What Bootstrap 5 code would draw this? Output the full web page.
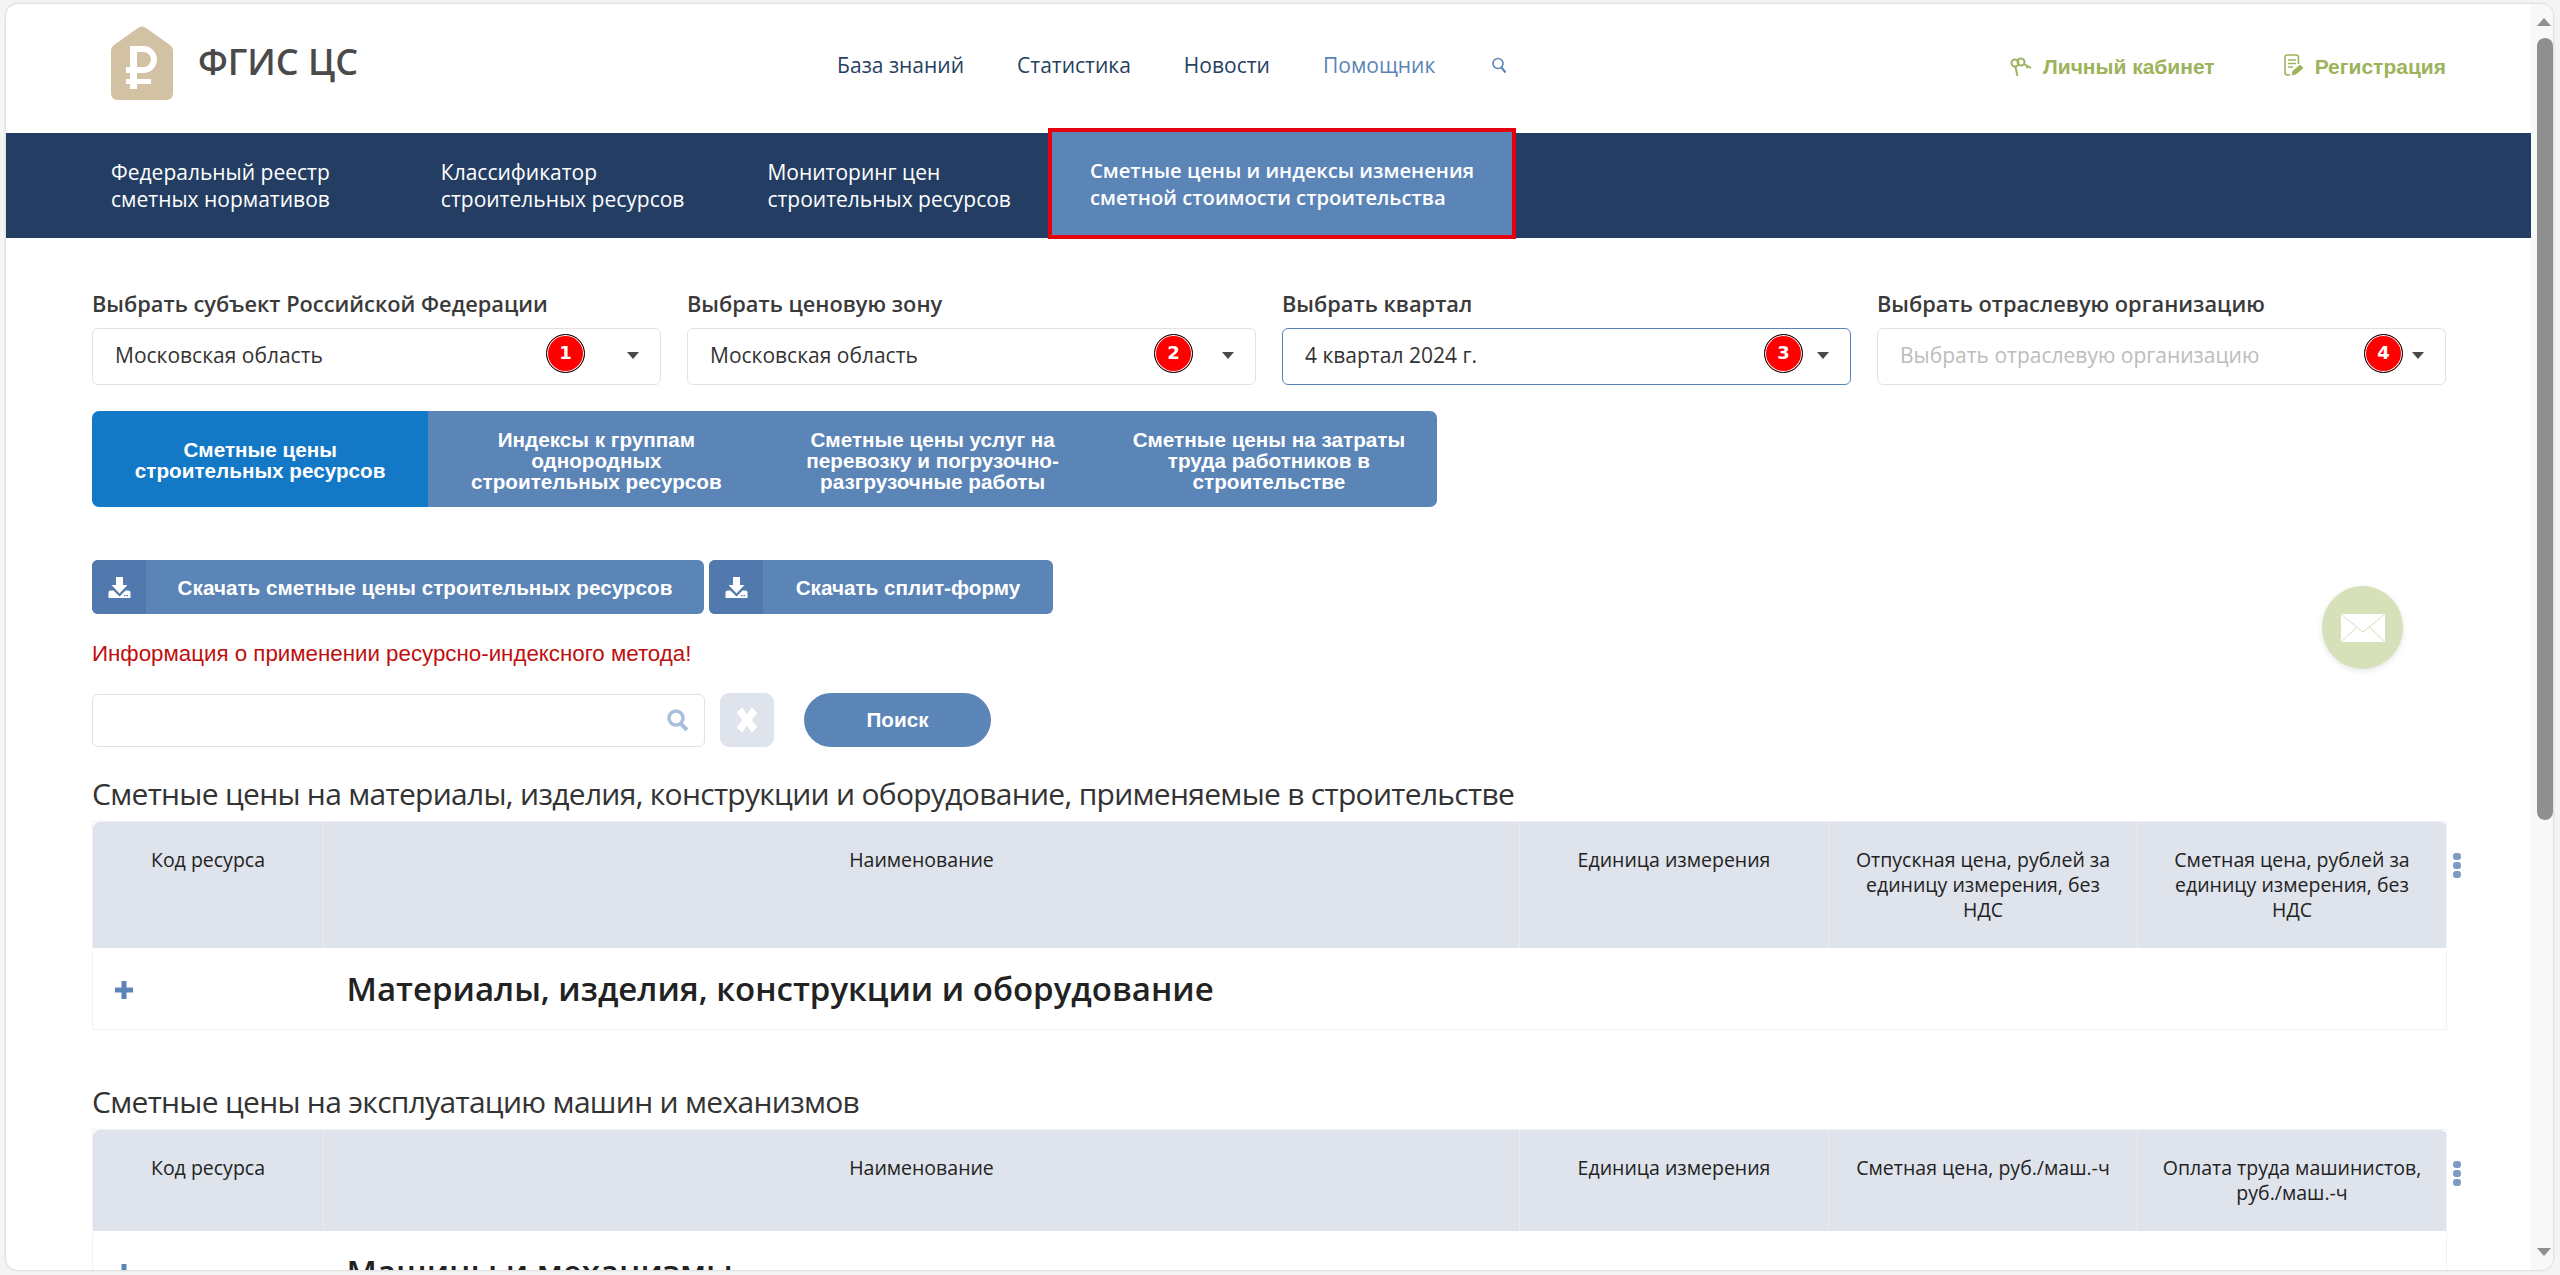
<!DOCTYPE html>
<html lang="ru"><head><meta charset="utf-8"><title>ФГИС ЦС</title>
<link href="https://cdn.jsdelivr.net/npm/bootstrap@5.3.0/dist/css/bootstrap.min.css" rel="stylesheet">
<style>
html,body{height:100%;overflow:hidden;}
body{background:#f4f4f4;padding:4px 7px 5px 6px;font-family:"Open Sans",sans-serif;color:#333;}
.win{height:100%;background:#fff;border-radius:12px;overflow:hidden;box-shadow:0 0 3px rgba(0,0,0,.2);}
.page{flex:1 1 auto;min-width:0;overflow:hidden;position:relative;}
.sbar{flex:0 0 22px;background:#f8f8f8;padding-top:14px;padding-bottom:14px;}
.tri-up{width:0;height:0;border-left:7px solid transparent;border-right:7px solid transparent;border-bottom:8px solid #8f8f8f;margin-left:6px;}
.tri-down{width:0;height:0;border-left:7px solid transparent;border-right:7px solid transparent;border-top:8px solid #8f8f8f;margin:auto 0 0 6px;}
.thumb{height:782px;width:16px;margin:12px 0 0 6px;background:#8f8f8f;border-radius:8px;}
.topbar{height:129px;padding:0 85px 11px 105px;}
.logo-name{font-size:36px;font-weight:600;color:#4a4a4a;margin-left:25px;line-height:1;margin-top:-2px;white-space:nowrap;}
.menu{gap:53px;margin-left:479px;margin-top:6px;font-size:21px;}
.menu a{color:#26405f;text-decoration:none;}
.menu a.hl{color:#5b84b7;}
.menu svg{margin-left:3px;}
.acct a{color:#9db35b;font-family:"Liberation Sans",sans-serif;font-weight:700;font-size:21px;text-decoration:none;gap:11px;}
.acct{gap:69px;margin-top:8px;}
.band{height:105px;background:#243e63;padding-left:105px;}
.band a{color:#fff;font-size:21px;line-height:27px;text-decoration:none;display:block;white-space:nowrap;}
.b1{margin-right:111px;} .b2{margin-right:83px;} .b3{margin-right:37px;}
.band a.act{font-size:20.2px;font-weight:600;background:#5b84b7;border:4px solid #e4000f;margin:-5px 0 -1px;padding:0 38px;height:111px;}
.fields{padding:52px 85px 0 86px;}
.flt{--bs-gutter-x:26px;}
.lbl{font-size:21.8px;font-weight:600;line-height:27px;margin-bottom:11px;color:#3a3a3a;}
.sel{height:57px;border:1px solid #e2e2e2;border-radius:6px;padding:0 21px 2px 22px;font-size:21px;color:#333;}
.sel.foc{border-color:#5b84b7;}
.sel.ph{color:#bcbcbc;}
.caret{margin-left:auto;width:0;height:0;border-left:6px solid transparent;border-right:6px solid transparent;border-top:7px solid #4a4a4a;}
.pin{position:absolute;top:5px;width:39px;height:39px;border-radius:50%;background:#f00;border:1.5px solid #000;color:#fff;font-family:"DejaVu Sans",sans-serif;font-weight:700;font-size:18px;line-height:36px;text-align:center;box-shadow:inset 0 0 0 1px #fff;}
.p1{right:75px;} .p2{right:62px;} .p3{right:47px;} .p4{right:42px;}
.tabs{margin-top:26px;width:1345px;border-radius:7px;overflow:hidden;}
.tabs div{flex:1 1 0;height:96px;background:#5b84b7;color:#fff;font-family:"Liberation Sans",sans-serif;font-weight:700;font-size:20.7px;line-height:21px;text-align:center;padding:2px 10px 0;}
.tabs div.cur{background:#1378c5;}
.dl{margin-top:53px;gap:5px;}
.dlb{height:54px;background:#5b84b7;color:#fff;border-radius:6px;font-family:"Liberation Sans",sans-serif;font-weight:700;font-size:20.7px;overflow:hidden;border:0;padding:0;}
.dli{width:54px;height:54px;background:#5179ad;}
.dlt1{width:558px;text-align:center;padding-top:2px;}.dlt2{width:290px;text-align:center;padding-top:2px;}
.warn{color:#be0f0f;font-family:"Liberation Sans",sans-serif;font-size:22.3px;line-height:24px;margin-top:28px;}
.srch{margin-top:27px;}
.sinp{width:613px;height:53px;border:1px solid #e2e2e2;border-radius:6px;padding-right:15px;}
.xbtn{width:54px;height:54px;margin-left:15px;background:#dfe3ec;border-radius:9px;border:0;padding:0;}
.gobtn{width:187px;height:54px;margin-left:30px;background:#5b84b7;color:#fff;border:0;border-radius:27px;font-family:"Liberation Sans",sans-serif;font-weight:700;font-size:20.7px;}
.ttl{font-size:30px;letter-spacing:-.7px;font-weight:400;line-height:38px;margin:28px 0 8px;color:#333;}
.ttl.t2{margin-top:53px;}
.tw{position:relative;width:2355px;}
.gr{width:100%;table-layout:fixed;border:1px solid #f0f1f4;}
.gr th{background:#dfe3ec;font-weight:400;font-size:19.5px;line-height:25px;text-align:center;vertical-align:top;color:#222;border-left:1px solid #ecedf2;border-bottom:3px solid #fff;box-shadow:0 1px 0 #dfe3ec;padding:25px 20px 0;}
.gr th:first-child{border-left:0;border-top-left-radius:7px;}
.gr th:last-child{border-top-right-radius:7px;}
.gr td{height:80px;vertical-align:middle;border:0;padding:0;}
.h1r th{height:128px;}.h2r th{height:103px;}
.c1{width:231px;}.c2{width:1196px;}.c3{width:309px;}.c4{width:309px;}
.plus{display:block;margin-left:22px;}
.gname{font-size:33px;font-weight:600;color:#222;padding:0 0 2px 23px!important;white-space:nowrap;}
.dots{position:absolute;top:32px;right:-14px;width:8px;}
.dots i{display:block;width:8px;height:7px;border-radius:3px;background:#7f9bc3;margin-bottom:2px;}
.mail{position:absolute;left:2316px;top:582px;width:81px;height:83px;border-radius:50%;background:#d6e0b9;box-shadow:0 2px 6px rgba(0,0,0,.1);}
</style></head><body>
<div class="win d-flex">
<div class="page">
 <header class="topbar d-flex align-items-center">
  <svg width="62" height="74" viewBox="0 0 62 74"><path d="M0 24 Q0 21 3 19 L27 2 Q31 -1 35 2 L59 19 Q62 21 62 24 V67 Q62 74 55 74 H7 Q0 74 0 67Z" fill="#d2c1a2"/><path fill-rule="evenodd" d="M19 63V58H15V53H19V47H15V41H19V20H32.500A13.500 13.500 0 0 1 32.500 47H26V53H40V58H26V63ZM26 26V41H32.500A7.500 7.500 0 0 0 32.500 26Z" fill="#fff"/></svg>
  <span class="logo-name">ФГИС ЦС</span>
  <nav class="menu d-flex align-items-center">
   <a href="#">База знаний</a><a href="#">Статистика</a><a href="#">Новости</a><a href="#" class="hl">Помощник</a>
   <svg width="17" height="18" viewBox="0 0 17 18"><circle cx="7" cy="6.500" r="5" fill="none" stroke="#5b84b7" stroke-width="1.600"/><path d="M10.500 10.500l4 5" stroke="#5b84b7" stroke-width="2.200"/></svg>
  </nav>
  <div class="acct ms-auto d-flex align-items-center">
   <a href="#" class="d-flex align-items-center"><svg width="22" height="20" viewBox="0 0 21 20" fill="none" stroke="#9db35b" stroke-width="2"><circle cx="4.500" cy="6" r="3.500"/><circle cx="10.500" cy="5" r="3.500"/><path d="M5 10l2 9M13.500 7l7 4M17 9l-1 2"/></svg>Личный кабинет</a>
   <a href="#" class="d-flex align-items-center"><svg class="mb-1" width="20" height="22" viewBox="0 0 20 22" fill="none" stroke="#9db35b" stroke-width="1.600"><path d="M6 21H3.500Q1 21 1 18.500V3.500Q1 1 3.500 1H12Q14.500 1 14.500 3.500V10"/><path d="M4 6H12M4 9.500H12M4 13H9" stroke-width="1.500"/><path d="M8 21l1-4 7-6 3 3-7 6z" fill="#9db35b" stroke-width=".8"/></svg>Регистрация</a>
  </div>
 </header>
 <nav class="band d-flex">
  <a href="#" class="b1 d-flex align-items-center"><span>Федеральный реестр<br>сметных нормативов</span></a>
  <a href="#" class="b2 d-flex align-items-center"><span>Классификатор<br>строительных ресурсов</span></a>
  <a href="#" class="b3 d-flex align-items-center"><span>Мониторинг цен<br>строительных ресурсов</span></a>
  <a href="#" class="act d-flex align-items-center"><span>Сметные цены и индексы изменения<br>сметной стоимости строительства</span></a>
 </nav>
 <main class="fields">
  <div class="row flt">
   <div class="col-3"><div class="lbl">Выбрать субъект Российской Федерации</div><div class="sel position-relative d-flex align-items-center">Московская область<span class="pin p1">1</span><span class="caret"></span></div></div>
   <div class="col-3"><div class="lbl">Выбрать ценовую зону</div><div class="sel position-relative d-flex align-items-center">Московская область<span class="pin p2">2</span><span class="caret"></span></div></div>
   <div class="col-3"><div class="lbl">Выбрать квартал</div><div class="sel foc position-relative d-flex align-items-center">4 квартал 2024 г.<span class="pin p3">3</span><span class="caret"></span></div></div>
   <div class="col-3"><div class="lbl">Выбрать отраслевую организацию</div><div class="sel ph position-relative d-flex align-items-center">Выбрать отраслевую организацию<span class="pin p4">4</span><span class="caret"></span></div></div>
  </div>
  <div class="tabs d-flex">
   <div class="cur d-flex align-items-center justify-content-center"><span>Сметные цены<br>строительных ресурсов</span></div>
   <div class="d-flex align-items-center justify-content-center"><span>Индексы к группам<br>однородных<br>строительных ресурсов</span></div>
   <div class="d-flex align-items-center justify-content-center"><span>Сметные цены услуг на<br>перевозку и погрузочно-<br>разгрузочные работы</span></div>
   <div class="d-flex align-items-center justify-content-center"><span>Сметные цены на затраты<br>труда работников в<br>строительстве</span></div>
  </div>
  <div class="dl d-flex">
   <button class="dlb d-flex align-items-center"><span class="dli d-flex align-items-center justify-content-center"><svg width="23" height="21" viewBox="0 0 22 21"><path fill="#fff" d="M7.500 0h7v8H19l-8 8.500L3 8h4.500z"/><path fill="#fff" d="M0 21V15.500Q0 13.500 2 13.500H5L11 19.500 17 13.500H20Q22 13.500 22 15.500V21Z"/><path fill="#5179ad" d="M15.500 18h1.500v1.200h-1.500zM18 18h1.500v1.200H18z"/></svg></span><span class="dlt1">Скачать сметные цены строительных ресурсов</span></button>
   <button class="dlb d-flex align-items-center"><span class="dli d-flex align-items-center justify-content-center"><svg width="23" height="21" viewBox="0 0 22 21"><path fill="#fff" d="M7.500 0h7v8H19l-8 8.500L3 8h4.500z"/><path fill="#fff" d="M0 21V15.500Q0 13.500 2 13.500H5L11 19.500 17 13.500H20Q22 13.500 22 15.500V21Z"/><path fill="#5179ad" d="M15.500 18h1.500v1.200h-1.500zM18 18h1.500v1.200H18z"/></svg></span><span class="dlt2">Скачать сплит-форму</span></button>
  </div>
  <div class="warn">Информация о применении ресурсно-индексного метода!</div>
  <div class="srch d-flex align-items-center">
   <div class="sinp d-flex align-items-center justify-content-end"><svg width="22" height="23" viewBox="0 0 22 23" fill="none" stroke="#a9bfdc"><circle cx="9" cy="9" r="7" stroke-width="3.500"/><path d="M14 15l6 6" stroke-width="4"/></svg></div>
   <button class="xbtn d-flex align-items-center justify-content-center"><svg width="26" height="28" viewBox="0 0 26 28"><path d="M3 7l5-5 5 7 5-7 5 5-6 7 6 7-5 5-5-7-5 7-5-5 6-7z" fill="#fff" stroke="#fff" stroke-linejoin="round"/></svg></button>
   <button class="gobtn">Поиск</button>
  </div>
  <h2 class="ttl">Сметные цены на материалы, изделия, конструкции и оборудование, применяемые в строительстве</h2>
  <div class="tw">
   <table class="gr"><thead><tr class="h1r"><th class="c1">Код ресурса</th><th class="c2">Наименование</th><th class="c3">Единица измерения</th><th class="c4">Отпускная цена, рублей за единицу измерения, без НДС</th><th>Сметная цена, рублей за единицу измерения, без НДС</th></tr></thead>
   <tbody><tr><td><svg class="plus" width="18" height="18" viewBox="0 0 18 18"><path d="M6.500 0h5v6.500H18v5h-6.500V18h-5v-6.500H0v-5h6.500z" fill="#5b84b7"/></svg></td><td class="gname" colspan="4">Материалы, изделия, конструкции и оборудование</td></tr></tbody></table>
   <div class="dots"><i></i><i></i><i></i></div>
  </div>
  <h2 class="ttl t2">Сметные цены на эксплуатацию машин и механизмов</h2>
  <div class="tw">
   <table class="gr"><thead><tr class="h2r"><th class="c1">Код ресурса</th><th class="c2">Наименование</th><th class="c3">Единица измерения</th><th class="c4">Сметная цена, руб./маш.-ч</th><th>Оплата труда машинистов, руб./маш.-ч</th></tr></thead>
   <tbody><tr><td><svg class="plus" width="18" height="18" viewBox="0 0 18 18"><path d="M6.500 0h5v6.500H18v5h-6.500V18h-5v-6.500H0v-5h6.500z" fill="#5b84b7"/></svg></td><td class="gname" colspan="4">Машины и механизмы</td></tr></tbody></table>
   <div class="dots"><i></i><i></i><i></i></div>
  </div>
 </main>
 <div class="mail d-flex align-items-center justify-content-center"><svg width="44" height="28" viewBox="0 0 44 28"><rect width="44" height="28" rx="1" fill="#fff"/><path d="M1 1l21 17L43 1M1 27l15-14M43 27L28 13" fill="none" stroke="#d6e0b9"/></svg></div>
</div>
<div class="sbar d-flex flex-column"><div class="tri-up"></div><div class="thumb"></div><div class="tri-down"></div></div>
</div>
<script src="https://cdn.jsdelivr.net/npm/bootstrap@5.3.0/dist/js/bootstrap.bundle.min.js"></script>
</body></html>
